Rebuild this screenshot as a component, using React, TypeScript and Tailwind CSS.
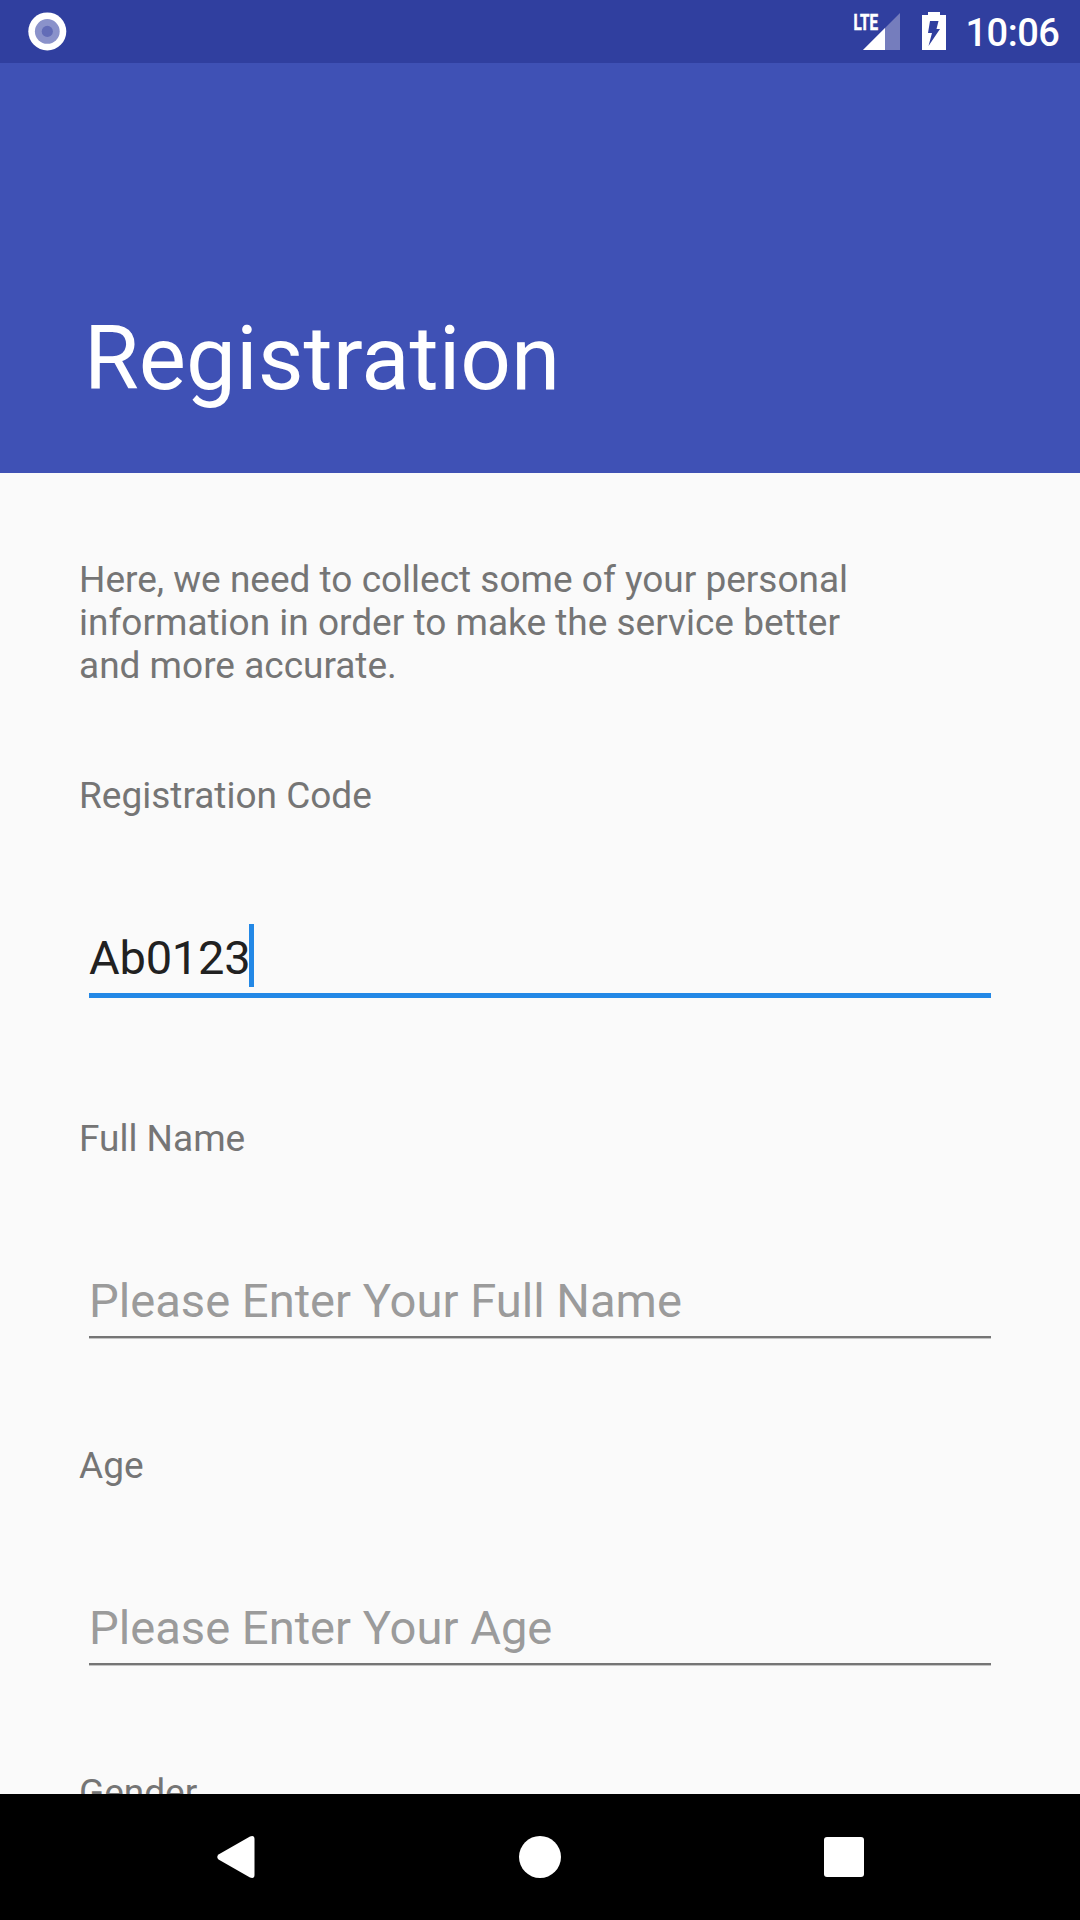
import React from "react";

function Field({ label, value, hint, active, className }: { label: string; value?: string; hint?: string; active?: boolean; className: string }) {
  return (
    <section className={`flex flex-col ${className}`}>
      <label className="ml-[79px] text-[37px] leading-[43px] text-[#757575]">{label}</label>
      <div className={`mt-[107px] ml-[89px] flex w-[902px] items-start ${active ? "h-[74px] border-b-[5px] border-[#2388e6]" : "h-[71px] border-b-2 border-[#757575] shadow-[0_1px_0_#c4c4c4]"}`}>
        <span className={`leading-[68px] whitespace-nowrap ${value ? "text-[47px] tracking-[-0.2px] text-[#212121]" : "text-[47.15px] text-[#9b9b9b]"}`}>{value || hint}</span>
        {active && <span className="-ml-[2px] h-[63px] w-[5px] bg-[#2388e6]" />}
      </div>
    </section>
  );
}

export default function App() {
  return (
    <div className="flex h-[1920px] w-[1080px] flex-col overflow-hidden bg-[#fafafa] font-['Roboto',sans-serif]">
      <header className="flex h-[63px] shrink-0 items-center bg-[#303f9f] text-white">
        <svg className="h-[63px] w-[80px]" viewBox="0 0 80 63">
          <circle cx="47.3" cy="31.4" r="19" fill="#fff" />
          <circle cx="47.3" cy="31.4" r="12.4" fill="#8a92ca" />
          <circle cx="47.3" cy="31.4" r="5.6" fill="#626cb7" />
        </svg>
        <svg className="ml-[770px] h-[63px] w-[110px] shrink-0" viewBox="850 0 110 63">
          <text x="853.5" y="30" fontSize="22.5" fontWeight="700" fill="#fff" stroke="#fff" strokeWidth="0.6" textLength="24.5" lengthAdjust="spacingAndGlyphs">LTE</text>
          <path d="M900 13V50H863Z" fill="#757dbd" />
          <path d="M885 28V50H863Z" fill="#fff" />
          <path fillRule="evenodd" fill="#fff" d="M922 15H928V12H940V15H946V50H922ZM930 21L928 33H932L928.5 46L940 29H936.5L938.5 21Z" />
        </svg>
        <span className="ml-[5.5px] pt-[3px] text-[38px] font-medium tracking-[-0.5px] whitespace-nowrap">10:06</span>
      </header>
      <div className="flex h-[410px] shrink-0 items-end bg-[#3f51b5] px-[84px] pb-[62px] text-[89px] leading-[105px] text-white">Registration</div>
      <main className="flex h-[1321px] shrink-0 flex-col overflow-hidden">
        <p className="mt-[85px] ml-[79px] text-[37px] leading-[43px] text-[#757575]">Here, we need to collect some of your personal<br />information in order to make the service better<br />and more accurate.</p>
        <Field className="mt-[87px]" label="Registration Code" value="Ab0123" active />
        <Field className="mt-[119px]" label="Full Name" hint="Please Enter Your Full Name" />
        <Field className="mt-[106px]" label="Age" hint="Please Enter Your Age" />
        <div className="mt-[106px] ml-[79px] text-[37px] leading-[43px] text-[#757575]">Gender</div>
      </main>
      <nav className="h-[126px] shrink-0 bg-black">
        <svg className="size-full" viewBox="0 0 1080 126" fill="#fff"><path d="M218.5 60.5L250 42.5Q254.500 41 254.500 45V81Q254.500 85 250 83.500L218.500 65.500Q216 63 218.500 60.500Z" /><circle cx="540" cy="63" r="21" /><rect x="824" y="43" width="40" height="40" rx="3" /></svg>
      </nav>
    </div>
  );
}
